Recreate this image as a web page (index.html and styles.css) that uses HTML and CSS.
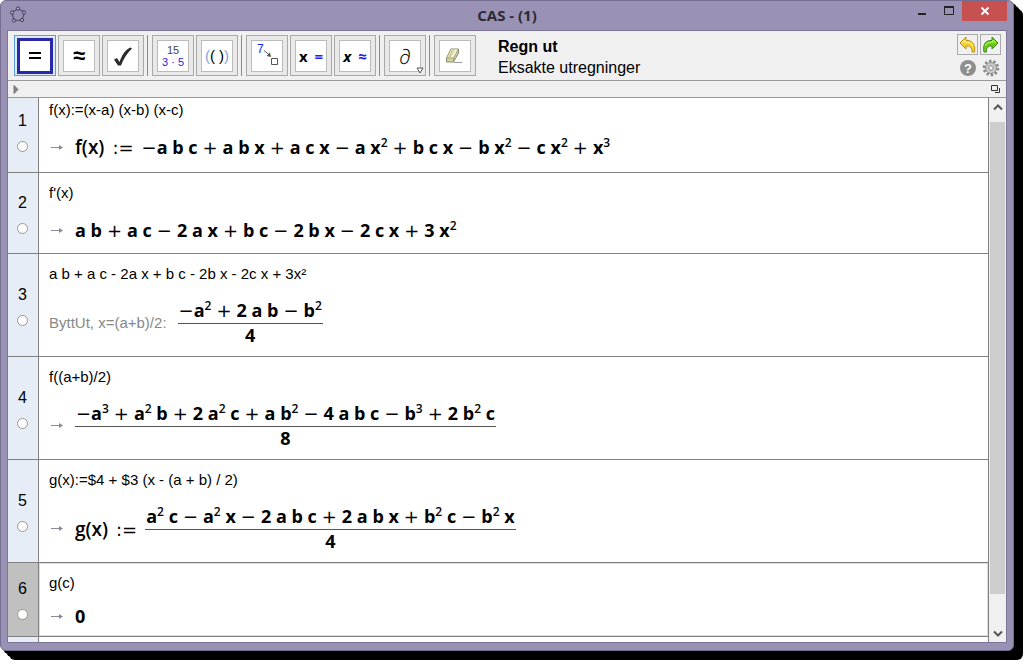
FILE: index.html
```html
<!DOCTYPE html>
<html lang="nb">
<head>
<meta charset="utf-8">
<title>CAS - (1)</title>
<link rel="stylesheet" href="styles.css">
</head>
<body>
<div class="window">
  <header class="titlebar">
    <svg class="logo" width="18" height="18" viewBox="0 0 18 18"><path d="M3 6.500L9 2.500L15.500 6.500L13 14L5 14.500Z" fill="none" stroke="#555" stroke-width="1.200"/><g fill="#aab0ff" stroke="#333" stroke-width="0.900"><circle cx="3" cy="6.500" r="1.600"/><circle cx="9" cy="2.500" r="1.600"/><circle cx="15" cy="6.500" r="1.600"/><circle cx="13" cy="14" r="1.600"/><circle cx="5" cy="14.500" r="1.600"/></g></svg>
    <h1 class="title">CAS - (1)</h1>
    <div class="controls">
      <button class="control" aria-label="Minimer"><svg width="12" height="12" viewBox="0 0 12 12"><path d="M2 9H10" stroke="#222" stroke-width="2"/></svg></button>
      <button class="control" aria-label="Maksimer"><svg width="12" height="12" viewBox="0 0 12 12"><path d="M1.500 2.500H10.500V9.500H1.500Z" fill="none" stroke="#222"/><path d="M1 2H11" stroke="#222" stroke-width="2"/></svg></button>
      <button class="control close" aria-label="Lukk"><svg width="10" height="10" viewBox="0 0 10 10"><path d="M1.500 1.500L8.500 8.500M8.500 1.500L1.500 8.500" stroke="#fff" stroke-width="1.900"/></svg></button>
    </div>
  </header>

  <main class="content">
    <div class="toolbar">
      <div class="tools">
        <button class="tool selected" aria-label="Regn ut"><span class="face"><svg width="30" height="30" viewBox="0 0 30 30"><path d="M9 12H21M9 17H21" stroke="#000" stroke-width="2"/></svg></span></button>
        <button class="tool" aria-label="Numerisk"><span class="face approx">≈</span></button>
        <button class="tool" aria-label="Behold inntasting"><span class="face"><svg width="30" height="30" viewBox="0 0 30 30"><path d="M6 18.500L9 17L11.500 21C14 14 17 9 22.500 6.500L24 7.500C19 12 15.500 18 13 24.500H10Z" fill="#2b2b2b"/></svg></span></button>
        <span class="separator"></span>
        <button class="tool" aria-label="Faktoriser"><span class="face factor"><span>15</span><span class="blue">3 · 5</span></span></button>
        <button class="tool" aria-label="Regn ut parenteser"><span class="face parens"><span class="pale">(</span><span>( )</span><span class="pale">)</span></span></button>
        <span class="separator"></span>
        <button class="tool" aria-label="Bytt ut"><span class="face"><svg width="30" height="30" viewBox="0 0 30 30"><text class="seven" x="5" y="12">7</text><path d="M12 9.500L18 14.500" stroke="#555"/><path d="M19 16L14.500 15L18 11.500Z" fill="#555"/><path d="M19.500 17.500H25.500V23.500H19.500Z" fill="none" stroke="#555"/></svg></span></button>
        <button class="tool" aria-label="Løs"><span class="face solve">x <span class="blue">=</span></span></button>
        <button class="tool" aria-label="Løs numerisk"><span class="face solve"><em>x</em> <span class="blue">≈</span></span></button>
        <span class="separator"></span>
        <button class="tool" aria-label="Derivert"><span class="face partial">∂</span><svg class="more" width="8" height="7" viewBox="0 0 8 7"><path d="M1 1H7L4 6Z" fill="#fff" stroke="#555"/></svg></button>
        <span class="separator"></span>
        <button class="tool" aria-label="Slett"><span class="face"><svg width="30" height="30" viewBox="0 0 30 30"><path d="M11 8H18.500V12L13.500 21H6.500V17Z" fill="#d3d39b" stroke="#8a8a68"/><path d="M11.500 8.500H18L13.500 17H7Z" fill="#f1f1dc"/><path d="M12 8.500H15L10.500 17H7.500Z" fill="#d3d39b"/><path d="M7 17H13.500V21M13.500 17L18.500 8" fill="none" stroke="#999977" stroke-width="0.800"/><path d="M14 21.500H22" stroke="#999"/></svg></span></button>
      </div>
      <div class="help"><strong>Regn ut</strong><span>Eksakte utregninger</span></div>
      <div class="actions">
        <button class="action framed" aria-label="Angre"><svg width="19" height="19" viewBox="0 0 19 19"><path d="M2 8L8 2V5.500C14 5 17.500 9 16.500 17H14C14.500 12.500 12 10.500 8 11V14Z" fill="#f7d52c" stroke="#b98e08"/><path d="M4 8L7 5V7C11 7 14 8 15 11" fill="none" stroke="#fff3a0"/></svg></button>
        <button class="action framed" aria-label="Gjør om"><svg width="19" height="19" viewBox="0 0 19 19"><path d="M17 8L11 2V5.500C5 5 1.500 9 3 17H5.500C5 12.500 7 10.500 11 11V14Z" fill="#6fd012" stroke="#368617"/><path d="M15 8L12 5V7C8 7 5 8 4 11" fill="none" stroke="#bdf67b"/></svg></button>
        <button class="action" aria-label="Hjelp"><svg width="18" height="18" viewBox="0 0 18 18"><circle cx="9" cy="9" r="8" fill="#8e8e8e"/><text class="question" x="9" y="14">?</text></svg></button>
        <button class="action" aria-label="Innstillinger"><svg width="18" height="18" viewBox="0 0 18 18"><circle cx="9" cy="9" r="7" fill="none" stroke="#888" stroke-width="2.600" stroke-dasharray="2.400 1.998"/><circle cx="9" cy="9" r="5.500" fill="#ccc" stroke="#888"/><circle cx="9" cy="9" r="2.300" fill="#f0f0f0" stroke="#888"/></svg></button>
      </div>
    </div>

    <div class="stylebar">
      <button class="bare" aria-label="Vis stilrad"><svg width="6" height="9" viewBox="0 0 6 9"><path d="M1 0.500L5 4.500L1 8.500Z" fill="#888" stroke="#555" stroke-width="0.700"/></svg></button>
      <button class="bare" aria-label="Eget vindu"><svg width="10" height="8" viewBox="0 0 10 8"><path d="M0.500 0.500H6.500V5.500H0.500Z" fill="none" stroke="#333"/><path d="M8.500 3V7.500H4" fill="none" stroke="#333"/></svg></button>
    </div>

    <div class="view">
      <div class="rows">
        <section class="row first">
          <div class="head"><label for="m1">1</label><input class="marble" type="checkbox" id="m1"></div>
          <div class="cell">
            <div class="entry">f(x):=(x-a) (x-b) (x-c)</div>
            <div class="result"><svg class="arrow" width="14" height="7" viewBox="0 0 14 7"><path d="M1 3.500H12" stroke="#88889a"/><path d="M9 1L13 3.500L9 6Z" fill="#88889a"/></svg>
              <div class="math"><span class="fn">f(x)</span><span class="assign">:=</span><span class="neg">−</span>a b c<span class="op">+</span>a b x<span class="op">+</span>a c x<span class="op">−</span>a x<sup>2</sup><span class="op">+</span>b c x<span class="op">−</span>b x<sup>2</sup><span class="op">−</span>c x<sup>2</sup><span class="op">+</span>x<sup>3</sup></div></div>
          </div>
        </section>
        <section class="row">
          <div class="head"><label for="m2">2</label><input class="marble" type="checkbox" id="m2"></div>
          <div class="cell">
            <div class="entry">f'(x)</div>
            <div class="result"><svg class="arrow" width="14" height="7" viewBox="0 0 14 7"><path d="M1 3.500H12" stroke="#88889a"/><path d="M9 1L13 3.500L9 6Z" fill="#88889a"/></svg>
              <div class="math">a b<span class="op">+</span>a c<span class="op">−</span>2 a x<span class="op">+</span>b c<span class="op">−</span>2 b x<span class="op">−</span>2 c x<span class="op">+</span>3 x<sup>2</sup></div></div>
          </div>
        </section>
        <section class="row">
          <div class="head"><label for="m3">3</label><input class="marble" type="checkbox" id="m3"></div>
          <div class="cell">
            <div class="entry">a b + a c - 2a x + b c - 2b x - 2c x + 3x²</div>
            <div class="result"><span class="command">ByttUt, x=(a+b)/2:</span>
              <div class="fraction"><div class="math"><span class="neg">−</span>a<sup>2</sup><span class="op">+</span>2 a b<span class="op">−</span>b<sup>2</sup></div><div class="math bottom">4</div></div></div>
          </div>
        </section>
        <section class="row">
          <div class="head"><label for="m4">4</label><input class="marble" type="checkbox" id="m4"></div>
          <div class="cell">
            <div class="entry">f((a+b)/2)</div>
            <div class="result"><svg class="arrow" width="14" height="7" viewBox="0 0 14 7"><path d="M1 3.500H12" stroke="#88889a"/><path d="M9 1L13 3.500L9 6Z" fill="#88889a"/></svg>
              <div class="fraction"><div class="math"><span class="neg">−</span>a<sup>3</sup><span class="op">+</span>a<sup>2</sup> b<span class="op">+</span>2 a<sup>2</sup> c<span class="op">+</span>a b<sup>2</sup><span class="op">−</span>4 a b c<span class="op">−</span>b<sup>3</sup><span class="op">+</span>2 b<sup>2</sup> c</div><div class="math bottom">8</div></div></div>
          </div>
        </section>
        <section class="row">
          <div class="head"><label for="m5">5</label><input class="marble" type="checkbox" id="m5"></div>
          <div class="cell">
            <div class="entry">g(x):=$4 + $3 (x - (a + b) / 2)</div>
            <div class="result"><svg class="arrow" width="14" height="7" viewBox="0 0 14 7"><path d="M1 3.500H12" stroke="#88889a"/><path d="M9 1L13 3.500L9 6Z" fill="#88889a"/></svg>
              <div class="math"><span class="fn">g(x)</span><span class="assign">:=</span></div>
              <div class="fraction"><div class="math">a<sup>2</sup> c<span class="op">−</span>a<sup>2</sup> x<span class="op">−</span>2 a b c<span class="op">+</span>2 a b x<span class="op">+</span>b<sup>2</sup> c<span class="op">−</span>b<sup>2</sup> x</div><div class="math bottom">4</div></div></div>
          </div>
        </section>
        <section class="row current">
          <div class="head"><label for="m6">6</label><input class="marble" type="checkbox" id="m6"></div>
          <div class="cell">
            <div class="entry">g(c)</div>
            <div class="result"><svg class="arrow" width="14" height="7" viewBox="0 0 14 7"><path d="M1 3.500H12" stroke="#88889a"/><path d="M9 1L13 3.500L9 6Z" fill="#88889a"/></svg>
              <div class="math">0</div></div>
          </div>
        </section>
        <section class="row rest"><div class="head"></div></section>
      </div>
      <div class="scrollbar">
        <button class="bare" aria-label="Rull opp"><svg width="10" height="7" viewBox="0 0 10 7"><path d="M1 5.500L5 1.500L9 5.500" fill="none" stroke="#555" stroke-width="2"/></svg></button>
        <div class="track"><div class="thumb"></div></div>
        <button class="bare" aria-label="Rull ned"><svg width="10" height="7" viewBox="0 0 10 7"><path d="M1 1.500L5 5.500L9 1.500" fill="none" stroke="#555" stroke-width="2"/></svg></button>
      </div>
    </div>
  </main>
</div>
</body>
</html>
```
FILE: styles.css
```css
* { box-sizing: border-box; }

body {
  margin: 0;
  min-height: 100vh;
  padding: 0 15px 15px 0;
  display: flex;
  background: #fff;
  color: #000;
  font: 16px/20px "Liberation Sans", Arial, sans-serif;
}

button {
  margin: 0;
  padding: 0;
  border: 0;
  background: none;
  color: inherit;
  font: inherit;
}

svg { display: block; flex: none; }

.window {
  flex: 1;
  min-width: 0;
  display: flex;
  flex-direction: column;
  padding: 0 6px 7px;
  border: 1px solid #746e91;
  border-radius: 6px;
  background: #9992b4;
  box-shadow: 3px 3px 0 #000, 6px 6px 0 #000, 9px 9px 0 #000;
}

.titlebar {
  display: grid;
  grid-template-columns: 1fr auto 1fr;
  height: 29px;
}

.logo { margin: 5px 2px; }

.title {
  margin: 0;
  font: bold 15px/29px "Open Sans", sans-serif;
  color: #2c2a35;
}

.controls { display: flex; justify-content: flex-end; align-items: flex-start; }

.control {
  display: flex;
  align-items: center;
  justify-content: center;
  width: 27px;
  height: 20px;
}

.close { width: 45px; background: #c75050; }

.content {
  flex: 1;
  display: flex;
  flex-direction: column;
  border: 1px solid #7c7597;
  background: #f0f0f0;
}

.toolbar {
  display: flex;
  align-items: flex-start;
  height: 50px;
  padding: 4px 5px 0 6px;
  border-bottom: 1px solid #999;
}

.tools { display: flex; gap: 2px; }

.tool {
  position: relative;
  display: flex;
  align-items: center;
  justify-content: center;
  width: 42px;
  height: 41px;
  border: 1px solid #a9a9a9;
  background: #e9e9e9;
}

.face {
  display: flex;
  align-items: center;
  justify-content: center;
  width: 32px;
  height: 32px;
  border: 1px solid #bbb;
  background: #fff;
}

.tool.selected { border-color: #5a9ddb; background: #dcebf9; }
.selected .face { width: 36px; height: 36px; border: 3px solid #2828a8; }
.approx { font: bold 22px/28px "Liberation Sans", sans-serif; }
.factor { flex-direction: column; font-size: 11px; line-height: 12px; color: #444; }
.blue { color: #2222ee; }
.parens { font-size: 15px; line-height: 20px; }
.pale { color: #7aa9dd; }
.seven { font: 12px "Liberation Sans", sans-serif; fill: #2222ee; }
.question { font: bold 13px "Liberation Sans", sans-serif; fill: #fff; text-anchor: middle; }
.solve { gap: 7px; font: bold 15px/20px "Open Sans", sans-serif; }
.partial { font: italic 300 21px/26px "Open Sans", sans-serif; }

.more { position: absolute; right: 1px; bottom: 1px; }

.separator { width: 1px; height: 41px; margin: 0 2px 0 1px; background: #888; }

.help {
  flex: 1;
  display: flex;
  flex-direction: column;
  padding: 1px 0 0 22px;
  line-height: 21px;
}

.actions {
  display: grid;
  grid-template-columns: 21px 21px;
  gap: 2px;
  margin-top: -1px;
}

.action { display: flex; align-items: center; justify-content: center; height: 21px; }
.framed { border: 1px solid #aaa; }

.stylebar {
  display: flex;
  align-items: center;
  justify-content: space-between;
  height: 17px;
  padding: 0 5px;
  border-bottom: 1px solid #999;
}

.bare { display: flex; align-items: center; justify-content: center; }

.view { flex: 1; display: flex; background: #fff; }

.rows { flex: 1; min-width: 0; display: flex; flex-direction: column; }

.row { display: flex; border-bottom: 1px solid #808080; }
.row.rest { flex: 1; border-bottom: 0; }

.head {
  display: flex;
  flex-direction: column;
  align-items: center;
  justify-content: center;
  gap: 10px;
  width: 31px;
  padding-right: 1px;
  border-right: 1px solid #808080;
  background: #e6edf7;
}

.marble {
  appearance: none;
  width: 11px;
  height: 11px;
  margin: 0;
  border: 1px solid #999985;
  border-radius: 50%;
  background: #fff;
}

.cell { flex: 1; padding: 10px; }
.entry { font-size: 15px; line-height: 20px; }
.result { display: flex; align-items: center; padding-top: 14px; }

.first .cell { padding-top: 2px; padding-bottom: 12px; }
.first .head { padding-bottom: 7px; }
.current .head { background: #c0c0c0; }
.current .cell { padding-bottom: 7px; box-shadow: inset 0 0 0 1px #ddd; }
.current .result { padding-top: 10px; }

.arrow { margin: 0 11px 0 1px; }
.command { margin-right: 11px; font-size: 15px; color: #888; }

.math {
  height: 26px;
  font: bold 18px/26px "Open Sans", sans-serif;
  white-space: nowrap;
}

.math sup {
  font-size: 12px;
  font-weight: 600;
  line-height: 0;
  vertical-align: 7px;
}

.op, .neg, .assign { font-family: "DejaVu Sans", sans-serif; font-weight: normal; line-height: 0; }
.op { margin: 0 5px; }
.fn { font-size: 19px; font-weight: 600; line-height: 0; }
.assign { margin: 0 8px; }

.fraction { display: flex; flex-direction: column; align-items: center; }
.fraction .math { padding: 0 1px; }
.fraction .bottom {
  align-self: stretch;
  height: 25px;
  border-top: 1px solid #555;
  line-height: 23px;
  text-align: center;
}

.result:has(.fraction) { padding-top: 13px; }
.cell:has(.fraction) { padding-bottom: 8px; }

.scrollbar {
  display: flex;
  flex-direction: column;
  width: 18px;
  padding-left: 1px;
  border-left: 1px solid #808080;
  background: #f0f0f0;
}

.scrollbar .bare { height: 18px; }
.track { flex: 1; padding-top: 6px; }
.thumb { height: 94%; margin-right: 1px; background: #cdcdcd; }
```
